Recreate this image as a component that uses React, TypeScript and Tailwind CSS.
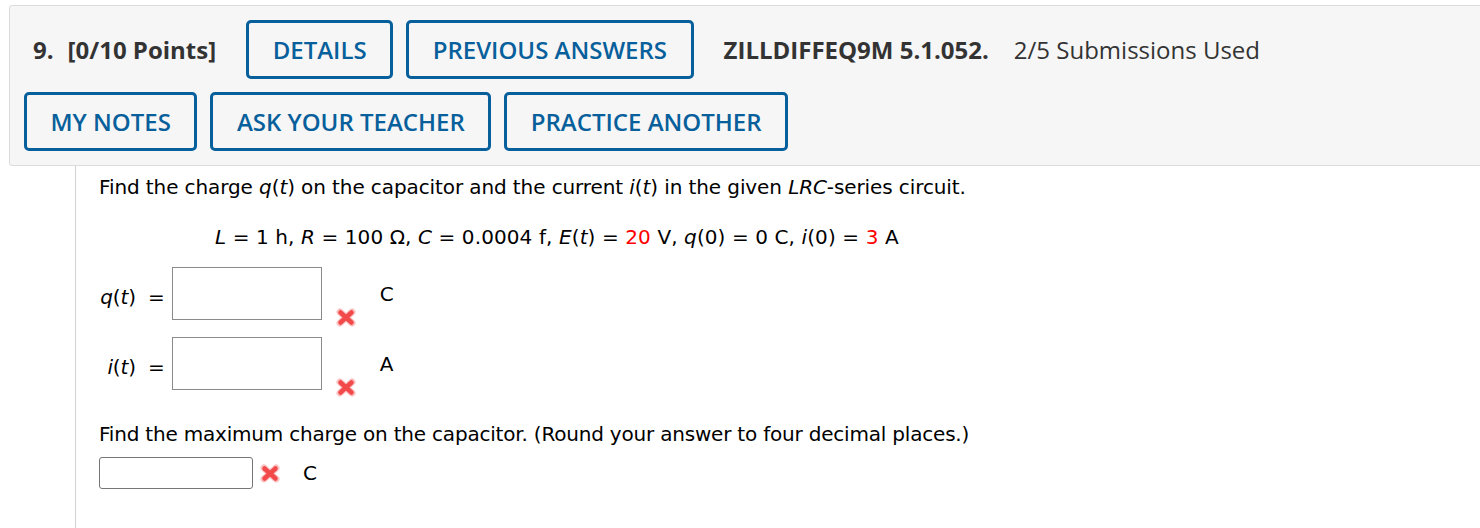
import type { ReactNode } from 'react'

const headerFont = { fontFamily: '"Open Sans", "Liberation Sans", sans-serif' }
const bodyFont = { fontFamily: '"DejaVu Sans", Verdana, sans-serif' }

function ActionButton({ children }: { children: ReactNode }) {
  return (
    <button className="h-[59px] px-[23.5px] border-[3px] border-[#07609b] rounded-[5px] bg-transparent text-[24px] font-semibold text-[#07609b] leading-none">
      {children}
    </button>
  )
}

function WrongMark({ className = '' }: { className?: string }) {
  return (
    <svg width="20" height="19" viewBox="0 0 20 19" className={className}>
      <g stroke="#f56a6a" strokeWidth="7" strokeLinecap="round" opacity="0.4">
        <line x1="4" y1="4" x2="16" y2="15" />
        <line x1="16" y1="4" x2="4" y2="15" />
      </g>
      <g stroke="#f24a4a" strokeWidth="4.5" strokeLinecap="round">
        <line x1="4.5" y1="4.5" x2="15.5" y2="14.5" />
        <line x1="15.5" y1="4.5" x2="4.5" y2="14.5" />
      </g>
    </svg>
  )
}

function AnswerRow({ label, unit }: { label: ReactNode; unit: string }) {
  return (
    <div className="flex items-start h-[70px]">
      <div className="w-[37px] text-right mt-[18px] whitespace-nowrap">{label}</div>
      <div className="ml-[12px] mt-[18px]">=</div>
      <div className="ml-[7px] w-[150px] h-[53px] border border-[#8a8a8a] bg-white" />
      <WrongMark className="ml-[14px] mt-[41px]" />
      <div className="ml-[24px] mt-[15px]">{unit}</div>
    </div>
  )
}

export default function App() {
  return (
    <div className="w-[1480px] h-[528px] overflow-hidden bg-white">
      <div className="pt-[5px] pl-[9px]">
        <div className="w-[1500px] border border-[#dcdcdc] rounded-[3px] bg-[#f6f6f6] pt-[14px] pb-[14px] pl-[14px]" style={headerFont}>
          <div className="flex items-center text-[#333]">
            <span className="ml-[9px] text-[24px] font-bold">9.</span>
            <span className="ml-[14px] text-[24px] font-bold">[0/10 Points]</span>
            <div className="ml-[30px] flex gap-[13px]">
              <ActionButton>DETAILS</ActionButton>
              <ActionButton>PREVIOUS ANSWERS</ActionButton>
            </div>
            <span className="ml-[30px] text-[24px] font-bold">ZILLDIFFEQ9M 5.1.052.</span>
            <span className="ml-[25px] text-[24px]">2/5 Submissions Used</span>
          </div>
          <div className="mt-[13px] flex gap-[13px]">
            <ActionButton>MY NOTES</ActionButton>
            <ActionButton>ASK YOUR TEACHER</ActionButton>
            <ActionButton>PRACTICE ANOTHER</ActionButton>
          </div>
        </div>
      </div>

      <div className="ml-[75px] border-l border-[#d2d2d2] h-[400px] pl-[23px] pt-[9px] text-[20px] leading-[24px] tracking-[-0.1px] text-black" style={bodyFont}>
        <p>
          Find the charge <i>q</i>(<i>t</i>) on the capacitor and the current <i>i</i>(<i>t</i>) in the given <i>LRC</i>-series circuit.
        </p>
        <p className="mt-[26px] ml-[116px] tracking-[0.1px]">
          <i>L</i> = 1 h, <i>R</i> = 100 Ω, <i>C</i> = 0.0004 f, <i>E</i>(<i>t</i>) = <span className="text-[#ff0000]">20</span> V, <i>q</i>(0) = 0 C, <i>i</i>(0) = <span className="text-[#ff0000]">3</span> A
        </p>
        <div className="mt-[18px]">
          <AnswerRow label={<><i>q</i>(<i>t</i>)</>} unit="C" />
          <AnswerRow label={<><i>i</i>(<i>t</i>)</>} unit="A" />
        </div>
        <p className="mt-[15px] tracking-[-0.2px]">Find the maximum charge on the capacitor. (Round your answer to four decimal places.)</p>
        <div className="mt-[11px] flex items-center">
          <div className="w-[154px] h-[32px] border border-[#767676] rounded-[3px] bg-white" />
          <WrongMark className="ml-[7px] mt-[1px]" />
          <span className="ml-[23px]">C</span>
        </div>
      </div>
    </div>
  )
}
